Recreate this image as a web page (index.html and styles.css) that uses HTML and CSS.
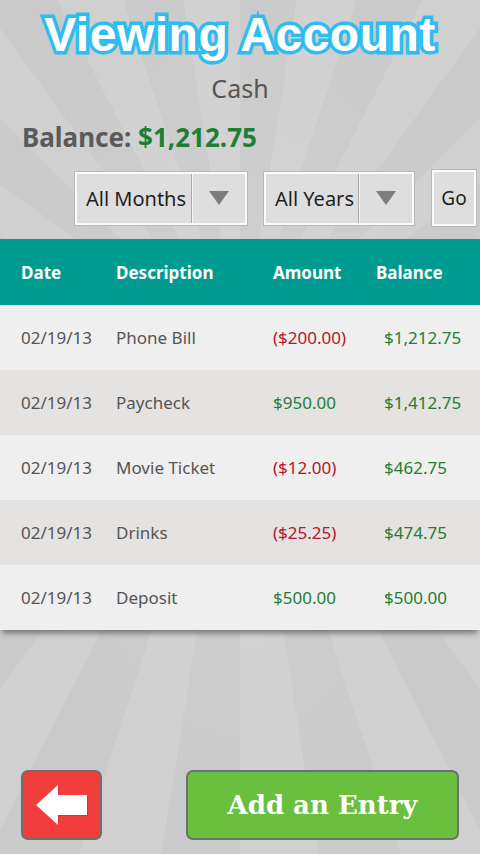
FILE: index.html
```html
<!DOCTYPE html>
<html lang="en">
<head>
<meta charset="utf-8">
<title>Viewing Account</title>
<link rel="stylesheet" href="styles.css">
</head>
<body>
<div class="screen">
  <h1 class="title">Viewing Account</h1>
  <div class="account">Cash</div>
  <div class="balance">Balance: <span class="pos">$1,212.75</span></div>
  <div class="filters">
    <div class="select months">
      <span class="select-label">All Months</span>
      <span class="select-arrow"><svg width="22" height="16" viewBox="0 0 22 16"><polygon points="1,1 21,1 11,15" fill="#7d7d7d"/></svg></span>
    </div>
    <div class="select years">
      <span class="select-label">All Years</span>
      <span class="select-arrow"><svg width="22" height="16" viewBox="0 0 22 16"><polygon points="1,1 21,1 11,15" fill="#7d7d7d"/></svg></span>
    </div>
    <div class="go">Go</div>
  </div>
  <div class="ledger">
    <div class="row head">
      <span>Date</span><span>Description</span><span>Amount</span><span>Balance</span>
    </div>
    <div class="row odd">
      <span>02/19/13</span><span>Phone Bill</span><span class="neg">($200.00)</span><span class="pos bal">$1,212.75</span>
    </div>
    <div class="row even">
      <span>02/19/13</span><span>Paycheck</span><span class="pos">$950.00</span><span class="pos bal">$1,412.75</span>
    </div>
    <div class="row odd">
      <span>02/19/13</span><span>Movie Ticket</span><span class="neg">($12.00)</span><span class="pos bal">$462.75</span>
    </div>
    <div class="row even">
      <span>02/19/13</span><span>Drinks</span><span class="neg">($25.25)</span><span class="pos bal">$474.75</span>
    </div>
    <div class="row odd">
      <span>02/19/13</span><span>Deposit</span><span class="pos">$500.00</span><span class="pos bal">$500.00</span>
    </div>
  </div>
  <div class="footer">
    <button class="back" aria-label="Back">
      <svg width="56" height="44" viewBox="0 0 56 44">
        <polygon points="2,22 24,2 24,12 53,12 53,32 24,32 24,42" fill="#b02020" opacity="0.35" transform="translate(1,1)"/>
        <polygon points="2,22 24,2 24,12 53,12 53,32 24,32 24,42" fill="#ffffff"/>
      </svg>
    </button>
    <button class="add">Add an Entry</button>
  </div>
</div>
</body>
</html>
```

FILE: styles.css
```css
* { box-sizing: border-box; }
html, body { margin: 0; padding: 0; }
body {
  width: 480px;
  height: 854px;
  overflow: hidden;
  font-family: "Noto Sans", "Open Sans", sans-serif;
}
.screen {
  width: 480px;
  height: 854px;
  display: flex;
  flex-direction: column;
  background:
    radial-gradient(ellipse at 50% 45%, rgba(255,255,255,0.12), rgba(255,255,255,0) 70%),
    repeating-conic-gradient(from 0deg at 50% 42%, #c9cac9 0deg 9deg, #cfd0cf 9deg 18deg);
}
.title {
  margin: 0;
  height: 64px;
  padding-top: 3px;
  line-height: 64px;
  text-align: center;
  font-family: "Liberation Sans", Arial, sans-serif;
  font-weight: 700;
  font-size: 48px;
  letter-spacing: 0.5px;
  color: #ffffff;
  -webkit-text-stroke: 7px #2fbdf0;
  paint-order: stroke fill;
}
.account {
  height: 48px;
  line-height: 48px;
  text-align: center;
  font-size: 25px;
  color: #555555;
}
.balance {
  height: 50px;
  line-height: 50px;
  padding-left: 22px;
  font-size: 26px;
  font-weight: 700;
  color: #5a5a5a;
}
.pos { color: #1f7e35; }
.neg { color: #b3162a; }
.filters {
  margin-top: 8px;
  height: 56px;
  display: flex;
  align-items: center;
  padding-left: 75px;
}
.select {
  height: 53px;
  display: flex;
  background: #dedede;
  border: 2px solid #fbfbfb;
  outline: 1px solid #b8b8b8;
  color: #1e1e1e;
  font-size: 20px;
}
.months { width: 172px; }
.years { width: 150px; margin-left: 17px; }
.select-label {
  flex: 1;
  display: flex;
  align-items: center;
  padding-left: 9px;
  border-right: 1px solid #a9a9a9;
}
.months .select-label { flex: 0 0 115px; }
.years .select-label { flex: 0 0 93px; }
.select-arrow {
  flex: 1;
  display: flex;
  align-items: center;
  justify-content: center;
  border-left: 1px solid #f4f4f4;
}
.go {
  margin-left: 18px;
  width: 44px;
  height: 56px;
  display: flex;
  align-items: center;
  justify-content: center;
  background: #dedede;
  border: 2px solid #fbfbfb;
  outline: 1px solid #b8b8b8;
  color: #1e1e1e;
  font-size: 19px;
}
.ledger {
  margin-top: 13px;
  box-shadow: 0 5px 6px -2px rgba(0,0,0,0.45);
}
.row {
  display: grid;
  grid-template-columns: 95px 157px 103px 1fr;
  align-items: center;
  padding-left: 21px;
  height: 65px;
  font-size: 17px;
  color: #555555;
}
.row .bal { padding-left: 8px; }
.row.head {
  height: 66px;
  background: #009b90;
  color: #ffffff;
  font-weight: 700;
  font-size: 17px;
}
.row.odd { background: #efefef; }
.row.even { background: #e5e2e2; }
.row .pos { color: #1f7e35; }
.row .neg { color: #b3162a; }
.footer {
  margin-top: auto;
  padding: 0 21px 14px 21px;
  display: flex;
  justify-content: space-between;
}
.footer button {
  height: 70px;
  border: 2px solid #6f6f6f;
  border-radius: 7px;
  padding: 0;
  cursor: pointer;
}
.back {
  width: 81px;
  background: #f23d3d;
  display: flex;
  align-items: center;
  justify-content: center;
}
.add {
  width: 273px;
  background: #6bbf3f;
  color: #ffffff;
  font-family: "DejaVu Serif", "Liberation Serif", serif;
  font-weight: 700;
  font-size: 26px;
}
```
